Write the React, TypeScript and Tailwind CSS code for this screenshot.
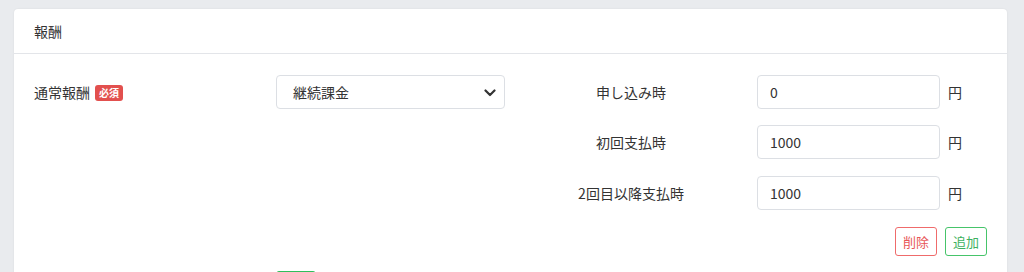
import React from "react";

const font = { fontFamily: '"Noto Sans CJK JP", "Noto Sans", sans-serif' };

function Row({ label, value }: { label: string; value: string }) {
  return (
    <div className="flex items-center">
      <div className="w-[252px] text-center text-[14px] text-[#333]">{label}</div>
      <div className="w-[183px] h-[34px] border border-[#dcdfe4] rounded-[4px] flex items-center px-[12px] text-[14px] text-[#333]">
        {value}
      </div>
      <div className="ml-[8px] text-[14px] text-[#333]">円</div>
    </div>
  );
}

export default function App() {
  return (
    <div className="h-[272px] overflow-hidden bg-[#e9ebee] pt-[9px] pl-[14px] pr-[17px]" style={font}>
      <div className="bg-white rounded-[4px] shadow-[0_0_2px_rgba(0,0,0,0.08)] h-[300px]">
        <div className="h-[45px] border-b border-[#e3e5e9] px-[20px] flex items-center text-[14px] text-[#333]">
          報酬
        </div>
        <div className="px-[20px] pt-[21px]">
          <div className="flex">
            <div className="w-[242px] h-[34px] flex items-center text-[14px] text-[#333]">
              通常報酬
              <span className="ml-[5px] mt-[2px] bg-[#e2504e] text-white text-[10px] font-bold leading-none rounded-[3px] px-[4px] py-[3px]">
                必須
              </span>
            </div>
            <div className="w-[229px] h-[34px] border border-[#dcdfe4] rounded-[4px] flex items-center justify-between pl-[16px] pr-[8px] text-[14px] text-[#333]">
              <span>継続課金</span>
              <svg width="12" height="8" viewBox="0 0 12 8" className="mt-[1px]">
                <path d="M1.5 1.5 L6 6 L10.5 1.5" fill="none" stroke="#333" strokeWidth="2.2" strokeLinecap="round" strokeLinejoin="round" />
              </svg>
            </div>
            <div className="flex-1 flex flex-col">
              <Row label="申し込み時" value="0" />
              <div className="mt-[16px]"><Row label="初回支払時" value="1000" /></div>
              <div className="mt-[17px]"><Row label="2回目以降支払時" value="1000" /></div>
              <div className="mt-[17px] flex justify-end gap-[8px]">
                <button className="w-[42px] h-[29px] border border-[#ef6b6b] rounded-[3px] text-[#e85656] text-[13px] bg-white">削除</button>
                <button className="w-[42px] h-[29px] border border-[#46c46a] rounded-[3px] text-[#3db160] text-[13px] bg-white">追加</button>
              </div>
            </div>
          </div>
          <div className="flex mt-[15px]">
            <div className="w-[242px]" />
            <div className="w-[40px] h-[29px] border border-[#2fbf5b] rounded-[3px] bg-[#3cc063]" />
          </div>
        </div>
      </div>
    </div>
  );
}
